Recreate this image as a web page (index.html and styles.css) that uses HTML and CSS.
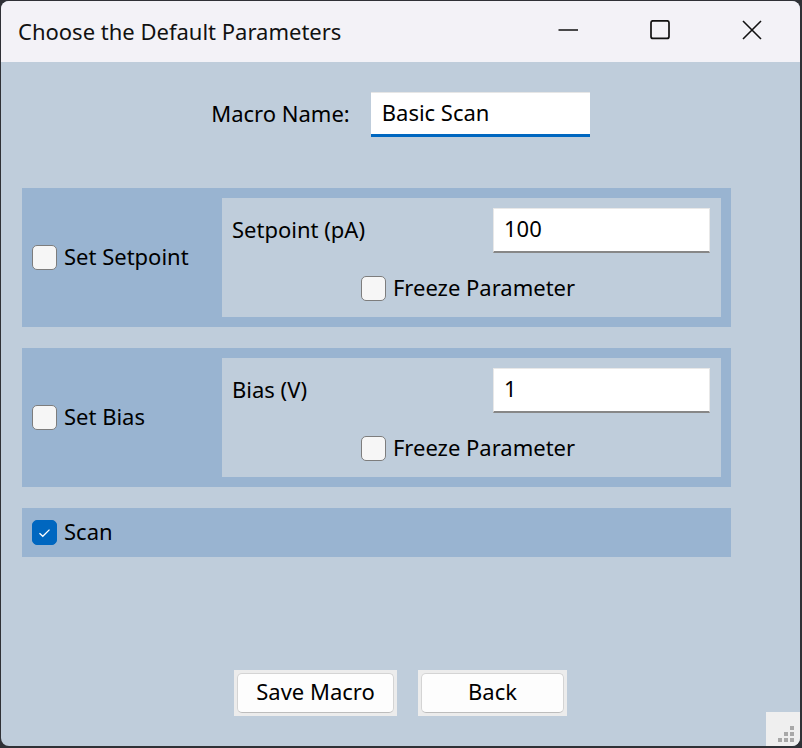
FILE: index.html
```html
<!DOCTYPE html>
<html>
<head>
<meta charset="utf-8">
<link rel="stylesheet" href="styles.css">
</head>
<body>
<div class="window">
  <div class="titlebar">
    <span class="title">Choose the Default Parameters</span>
    <div class="controls">
      <span class="ctl"><svg width="20" height="20" viewBox="0 0 20 20"><path d="M0.5 10h19.5" stroke="#111" stroke-width="1.6" fill="none"/></svg></span>
      <span class="ctl"><svg width="20" height="20" viewBox="0 0 20 20"><rect x="1" y="0.8" width="18" height="17.6" rx="2" stroke="#111" stroke-width="1.7" fill="none"/></svg></span>
      <span class="ctl"><svg width="20" height="20" viewBox="0 0 20 20"><path d="M1 1L19 19M19 1L1 19" stroke="#111" stroke-width="1.6" fill="none"/></svg></span>
    </div>
  </div>
  <div class="content">
    <div class="name-row">
      <span class="lbl">Macro Name:</span>
      <div class="name-input"><span class="lbl">Basic Scan</span></div>
    </div>

    <div class="group">
      <div class="group-check"><span class="cb"></span><span class="lbl">Set Setpoint</span></div>
      <div class="inner">
        <div class="inner-row"><span class="lbl">Setpoint (pA)</span><div class="num-input"><span class="lbl">100</span></div></div>
        <div class="freeze"><span class="cb"></span><span class="lbl">Freeze Parameter</span></div>
      </div>
    </div>

    <div class="group">
      <div class="group-check"><span class="cb"></span><span class="lbl">Set Bias</span></div>
      <div class="inner">
        <div class="inner-row"><span class="lbl">Bias (V)</span><div class="num-input"><span class="lbl">1</span></div></div>
        <div class="freeze"><span class="cb"></span><span class="lbl">Freeze Parameter</span></div>
      </div>
    </div>

    <div class="scan-row">
      <span class="cb checked"><svg width="13" height="10" viewBox="0 0 13 10"><path d="M1.5 5.2L4.8 8.3L11.5 1.6" stroke="#fff" stroke-width="1.3" fill="none"/></svg></span><span class="lbl">Scan</span>
    </div>

    <div class="buttons">
      <div class="btn-frame save"><div class="btn"><span class="lbl">Save Macro</span></div></div>
      <div class="btn-frame back"><div class="btn"><span class="lbl">Back</span></div></div>
    </div>
  </div>
  <div class="grip"><svg width="34" height="34" viewBox="0 0 34 34" fill="#a8a8a8"><rect x="24" y="14" width="4" height="4"/><rect x="18" y="20" width="4" height="4"/><rect x="24" y="20" width="4" height="4"/><rect x="12" y="26" width="4" height="4"/><rect x="18" y="26" width="4" height="4"/><rect x="24" y="26" width="4" height="4"/></svg></div>
</div>
</body>
</html>
```
FILE: styles.css
```css
* { box-sizing: border-box; }
html, body { margin: 0; height: 100%; }
body {
  background: #2f3136;
  font-family: "Noto Sans", sans-serif;
  overflow: hidden;
  color: #000;
}
.window {
  position: relative;
  margin: 1px 2px 0 1px;
  width: 799px;
  height: 745px;
  border-radius: 8px;
  overflow: hidden;
  background: #bfcddb;
  display: flex;
  flex-direction: column;
}
.titlebar {
  height: 61px;
  flex: none;
  background: #f3f2f7;
  display: flex;
  align-items: center;
  justify-content: space-between;
}
.title {
  padding-left: 17px;
  padding-bottom: 1px;
  font-size: 22px;
  color: #111;
}
.controls {
  display: flex;
  align-self: stretch;
  margin-right: 2px;
}
.ctl {
  width: 92px;
  display: flex;
  align-items: center;
  justify-content: center;
  padding-bottom: 3px;
}
.content {
  flex: 1;
  display: flex;
  flex-direction: column;
  padding: 30px 0 30px 0;
  font-size: 22px;
}
.lbl {
  padding-bottom: 4px;
}
.name-row {
  display: flex;
  align-items: center;
  justify-content: center;
  gap: 21px;
  height: 45px;
}
.name-input {
  width: 219px;
  height: 45px;
  background: #fff;
  border-top: 1px solid #e6e6e6;
  border-bottom: 3px solid #0067c0;
  padding-left: 11px;
  display: flex;
  align-items: center;
}
.group {
  margin-left: 21px;
  width: 709px;
  height: 139px;
  background: #99b4d1;
  display: flex;
  padding: 10px 10px 10px 0;
  margin-top: 21px;
}
.name-row + .group { margin-top: 51px; }
.group-check {
  width: 200px;
  display: flex;
  align-items: center;
  gap: 7px;
  padding-left: 10px;
}
.inner {
  flex: 1;
  background: #bfcddb;
  padding: 10px 11px 0 10px;
}
.inner-row {
  display: flex;
  align-items: center;
  justify-content: space-between;
}
.num-input {
  width: 217px;
  height: 45px;
  background: #fff;
  border: 1px solid #e8e8e8;
  border-bottom: 2px solid #878787;
  padding-left: 10px;
  display: flex;
  align-items: center;
}
.freeze {
  margin-top: 23px;
  height: 25px;
  display: flex;
  align-items: center;
  justify-content: center;
  gap: 7px;
  padding-right: 6px;
}
.cb {
  width: 25px;
  height: 25px;
  flex: none;
  border: 1px solid #7d7d7d;
  border-radius: 5px;
  background: #f6f6f6;
  display: flex;
  align-items: center;
  justify-content: center;
}
.cb.checked {
  background: #0067c0;
  border-color: #0067c0;
}
.scan-row {
  margin-left: 21px;
  margin-top: 21px;
  width: 709px;
  height: 49px;
  background: #99b4d1;
  display: flex;
  align-items: center;
  gap: 7px;
  padding-left: 10px;
}
.buttons {
  margin-top: auto;
  display: flex;
  justify-content: center;
  gap: 21px;
}
.btn-frame {
  height: 46px;
  background: #ececec;
  padding: 3px;
}
.btn-frame.save { width: 163px; }
.btn-frame.back { width: 149px; }
.btn {
  height: 100%;
  background: #fdfdfd;
  border: 1px solid #d4d4d4;
  border-bottom-color: #bdbdbd;
  border-radius: 5px;
  display: flex;
  align-items: center;
  justify-content: center;
}
.grip {
  position: absolute;
  right: 0;
  bottom: 0;
  width: 34px;
  height: 34px;
  background: #efefef;
}
```
